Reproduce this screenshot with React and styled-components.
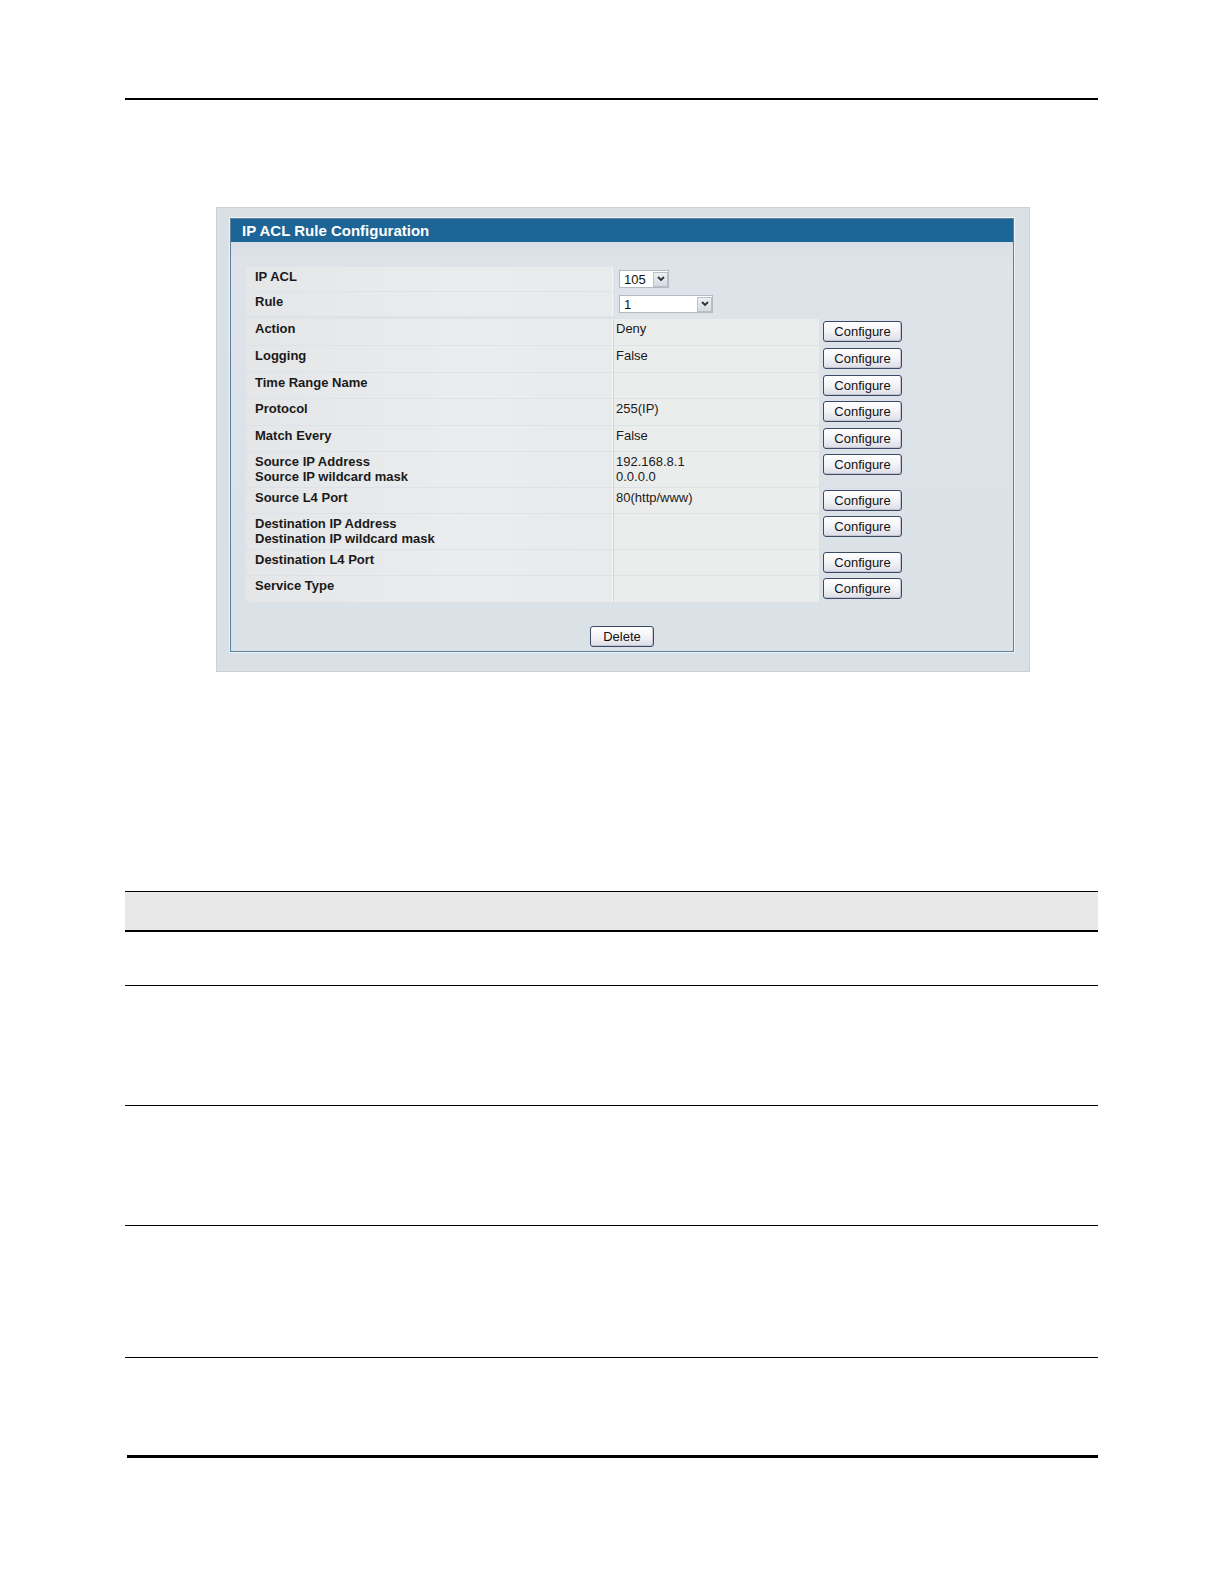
import styled, { createGlobalStyle } from "styled-components";

const GlobalStyle = createGlobalStyle`
  html, body {
    margin: 0;
    padding: 0;
    background: #ffffff;
  }
  body {
    font-family: "Liberation Sans", Arial, sans-serif;
  }
`;

const Page = styled.div`
  width: 973px;
  padding: 98px 0 0 125px;
  display: flex;
  flex-direction: column;
`;

const Rule = styled.div`
  height: ${(p) => p.$h || 1}px;
  background: #000;
  margin-left: ${(p) => p.$indent || 0}px;
  margin-top: ${(p) => p.$mt || 0}px;
`;

const Figure = styled.div`
  margin: 107px 0 0 91px;
  width: 814px;
  height: 465px;
  box-sizing: border-box;
  background: #d9e1e6;
  border: 1px solid #c9d1d6;
  padding: 10px 15px 0 13px;
  display: flex;
  flex-direction: column;
`;

const Panel = styled.div`
  border: 1px solid #5b819c;
  box-shadow: 0 0 0 1px #eef2f5;
  background: linear-gradient(#d3d9df 0px, #dde3e8 40px, #dbe2e7 100%);
  display: flex;
  flex-direction: column;
  height: 434px;
  box-sizing: border-box;
`;

const Header = styled.div`
  height: 23px;
  background: #1c6596;
  color: #ffffff;
  font-weight: bold;
  font-size: 15px;
  line-height: 23px;
  padding-left: 11px;
`;

const Body = styled.div`
  padding-top: 25px;
  display: flex;
  flex-direction: column;
`;

const Rows = styled.div`
  display: flex;
  flex-direction: column;
  gap: 1px;
  padding-left: 15px;
`;

const Row = styled.div`
  display: flex;
  height: ${(p) => p.$h}px;
  margin-top: ${(p) => p.$mt || 0}px;
`;

const LabelCell = styled.div`
  width: 357px;
  padding: 2px 0 0 9px;
  background: linear-gradient(90deg, #e4e6e8 0%, #ebeced 60%, #e9eaec 100%);
  border-radius: 2px 0 0 2px;
  border-right: 1px solid #f6f7f7;
  font-weight: bold;
  font-size: 13px;
  line-height: 15px;
  color: #1a1a1a;
`;

const ValueCell = styled.div`
  width: 203px;
  padding: 2px 0 0 2px;
  background: ${(p) => (p.$plain ? "transparent" : "#ebecec")};
  border-left: 1px solid ${(p) => (p.$plain ? "transparent" : "#d2d5d8")};
  font-size: 13px;
  line-height: 15px;
  color: #1a1a1a;
`;

const ActionCell = styled.div`
  padding: 2px 0 0 4px;
`;

const Button = styled.button`
  font-family: "Liberation Sans", Arial, sans-serif;
  font-size: 13px;
  color: #111;
  width: ${(p) => p.$w}px;
  height: 21px;
  padding: 0;
  border: 1px solid #3c4a66;
  border-radius: 3px;
  background: linear-gradient(#ffffff 0%, #f3f3f7 50%, #dcdce6 100%);
  box-shadow: inset -1px -1px 0 #c4c4d2;
  cursor: pointer;
`;

const Select = styled.div`
  margin: 1px 0 0 3px;
  width: ${(p) => p.$w}px;
  height: 18px;
  box-sizing: border-box;
  background: #ffffff;
  border: 1px solid #b4bac2;
  display: flex;
  align-items: center;
  justify-content: space-between;
  font-size: 13px;
  color: #111;
  padding-left: 4px;
`;

const Arrow = styled.div`
  width: 15px;
  height: 15px;
  margin-right: 0;
  background: linear-gradient(#eef0f3, #d6dbe1);
  border: 1px solid #b9c0c8;
  box-sizing: border-box;
  display: flex;
  align-items: center;
  justify-content: center;
`;

const Footer = styled.div`
  display: flex;
  justify-content: center;
  margin-top: 24px;
`;

const DocTable = styled.div`
  margin-top: 219px;
  display: flex;
  flex-direction: column;
`;

const HeadBand = styled.div`
  height: 38px;
  background: #e8e8e8;
  border-top: 1px solid #000;
  border-bottom: 2px solid #000;
`;

const DocRow = styled.div`
  height: ${(p) => p.$h}px;
  border-bottom: 1px solid #000;
`;

const Chevron = () => (
  <svg width="8" height="6" viewBox="0 0 8 6">
    <polyline points="1,1 4,4 7,1" fill="none" stroke="#2a3140" strokeWidth="1.8" />
  </svg>
);

const rows = [
  { label: ["Action"], value: ["Deny"], h: 26 },
  { label: ["Logging"], value: ["False"], h: 26 },
  { label: ["Time Range Name"], value: [], h: 25 },
  { label: ["Protocol"], value: ["255(IP)"], h: 26 },
  { label: ["Match Every"], value: ["False"], h: 25 },
  { label: ["Source IP Address", "Source IP wildcard mask"], value: ["192.168.8.1", "0.0.0.0"], h: 35 },
  { label: ["Source L4 Port"], value: ["80(http/www)"], h: 25 },
  { label: ["Destination IP Address", "Destination IP wildcard mask"], value: [], h: 35 },
  { label: ["Destination L4 Port"], value: [], h: 25 },
  { label: ["Service Type"], value: [], h: 26 },
];

const Lines = ({ items }) =>
  items.map((t) => <div key={t}>{t}</div>);

export default function App() {
  return (
    <>
      <GlobalStyle />
      <Page>
        <Rule $h={2} />
        <Figure>
          <Panel>
            <Header>IP ACL Rule Configuration</Header>
            <Body>
              <Rows>
                <Row $h={24}>
                  <LabelCell>IP ACL</LabelCell>
                  <ValueCell $plain>
                    <Select $w={50}>
                      105
                      <Arrow>
                        <Chevron />
                      </Arrow>
                    </Select>
                  </ValueCell>
                </Row>
                <Row $h={24}>
                  <LabelCell>Rule</LabelCell>
                  <ValueCell $plain>
                    <Select $w={94}>
                      1
                      <Arrow>
                        <Chevron />
                      </Arrow>
                    </Select>
                  </ValueCell>
                </Row>
                {rows.map((r, i) => (
                  <Row key={r.label[0]} $h={r.h} $mt={i === 0 ? 2 : 0}>
                    <LabelCell>
                      <Lines items={r.label} />
                    </LabelCell>
                    <ValueCell>
                      <Lines items={r.value} />
                    </ValueCell>
                    <ActionCell>
                      <Button $w={79}>Configure</Button>
                    </ActionCell>
                  </Row>
                ))}
              </Rows>
              <Footer>
                <Button $w={64}>Delete</Button>
              </Footer>
            </Body>
          </Panel>
        </Figure>
        <DocTable>
          <HeadBand />
          <DocRow $h={53} />
          <DocRow $h={119} />
          <DocRow $h={119} />
          <DocRow $h={131} />
        </DocTable>
        <Rule $h={3} $indent={2} $mt={97} />
      </Page>
    </>
  );
}
